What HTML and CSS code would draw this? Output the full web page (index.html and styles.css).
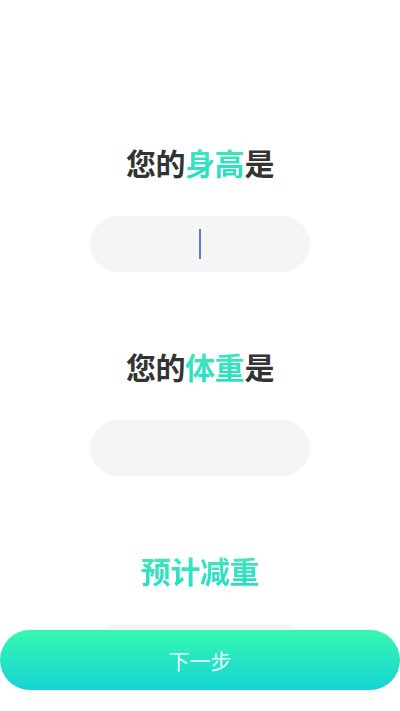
FILE: index.html
```html
<!DOCTYPE html>
<html lang="zh-CN">
<head>
<meta charset="utf-8">
<meta name="viewport" content="width=device-width, initial-scale=1">
<title>身高体重</title>
<link rel="stylesheet" href="styles.css">
</head>
<body>
<main class="page">
  <section class="field">
    <h2 class="title">您的<span class="hl">身高</span>是</h2>
    <div class="input"><span class="cursor"></span></div>
  </section>
  <section class="field">
    <h2 class="title">您的<span class="hl">体重</span>是</h2>
    <div class="input"></div>
  </section>
  <section class="field">
    <h2 class="title"><span class="hl">预计减重</span></h2>
    <div class="input"></div>
  </section>
</main>
<button class="next">下一步</button>
</body>
</html>
```
FILE: styles.css
```css
html, body {
  margin: 0;
  padding: 0;
  background: #ffffff;
}
body {
  font-family: "Noto Sans CJK SC", "Noto Sans", sans-serif;
  width: 400px;
  height: 711px;
  overflow: hidden;
}
.page {
  display: flex;
  flex-direction: column;
  align-items: center;
  padding-top: 144px;
  gap: 76px;
}
.field {
  display: flex;
  flex-direction: column;
  align-items: center;
  gap: 32px;
}
.title {
  margin: 0;
  font-size: 30px;
  line-height: 36px;
  height: 40px;
  font-weight: 700;
  color: #333333;
  letter-spacing: -0.4px;
}
.hl {
  background: linear-gradient(180deg, #44eab6 0%, #22dcc6 100%);
  -webkit-background-clip: text;
  background-clip: text;
  color: transparent;
}
.input {
  width: 220px;
  height: 56px;
  border-radius: 28px;
  background: #f5f5f5;
  display: flex;
  align-items: center;
  justify-content: center;
}
.cursor {
  display: block;
  width: 2px;
  height: 30px;
  background: #5a7ae0;
  margin-left: -1px;
}
.next {
  position: fixed;
  left: 0;
  bottom: 21px;
  width: 400px;
  height: 60px;
  border: none;
  border-radius: 30px;
  background: linear-gradient(180deg, #36f7b0 0%, #16d4d4 100%);
  color: rgba(255, 255, 255, 0.92);
  font-family: "Noto Sans CJK SC", "Noto Sans", sans-serif;
  font-size: 21px;
  font-weight: 400;
  padding: 0;
}
```
